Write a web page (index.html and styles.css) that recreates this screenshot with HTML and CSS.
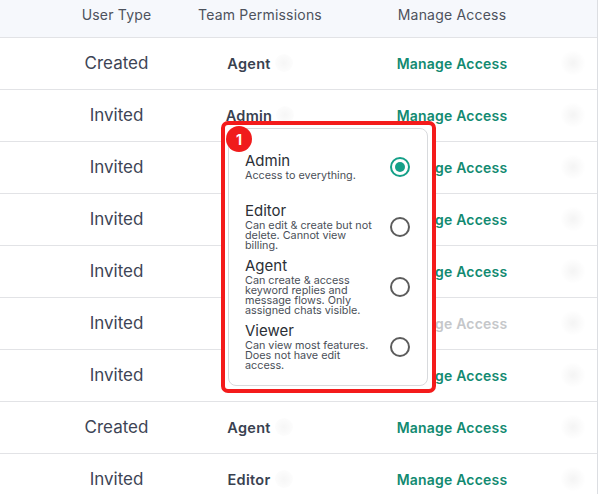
FILE: index.html
```html
<!DOCTYPE html>
<html lang="en">
<head>
  <meta charset="UTF-8" />
  <title>Team Members</title>
  <link rel="stylesheet" href="styles.css">
</head>
<body>
  <div class="table">
    <div class="row head">
      <div class="cell">User Type</div>
      <div class="cell">Team Permissions</div>
      <div class="cell access">Manage Access</div>
      <div class="cell"></div>
    </div>

    <div class="row">
      <div class="cell type">Created</div>
      <div class="cell"><span class="perm">Agent</span><span class="chev"></span></div>
      <div class="cell access"><a class="manage">Manage Access</a></div>
      <div class="cell"><span class="dots"></span></div>
    </div>
    <div class="row">
      <div class="cell type">Invited</div>
      <div class="cell"><span class="perm">Admin</span><span class="chev"></span></div>
      <div class="cell access"><a class="manage">Manage Access</a></div>
      <div class="cell"><span class="dots"></span></div>
    </div>
    <div class="row">
      <div class="cell type">Invited</div>
      <div class="cell"><span class="perm">Agent</span><span class="chev"></span></div>
      <div class="cell access"><a class="manage">Manage Access</a></div>
      <div class="cell"><span class="dots"></span></div>
    </div>
    <div class="row">
      <div class="cell type">Invited</div>
      <div class="cell"><span class="perm">Editor</span><span class="chev"></span></div>
      <div class="cell access"><a class="manage">Manage Access</a></div>
      <div class="cell"><span class="dots"></span></div>
    </div>
    <div class="row">
      <div class="cell type">Invited</div>
      <div class="cell"><span class="perm">Agent</span><span class="chev"></span></div>
      <div class="cell access"><a class="manage">Manage Access</a></div>
      <div class="cell"><span class="dots"></span></div>
    </div>
    <div class="row">
      <div class="cell type">Invited</div>
      <div class="cell"><span class="perm">Admin</span><span class="chev"></span></div>
      <div class="cell access"><a class="manage disabled">Manage Access</a></div>
      <div class="cell"><span class="dots"></span></div>
    </div>
    <div class="row">
      <div class="cell type">Invited</div>
      <div class="cell"><span class="perm">Viewer</span><span class="chev"></span></div>
      <div class="cell access"><a class="manage">Manage Access</a></div>
      <div class="cell"><span class="dots"></span></div>
    </div>
    <div class="row">
      <div class="cell type">Created</div>
      <div class="cell"><span class="perm">Agent</span><span class="chev"></span></div>
      <div class="cell access"><a class="manage">Manage Access</a></div>
      <div class="cell"><span class="dots"></span></div>
    </div>
    <div class="row">
      <div class="cell type">Invited</div>
      <div class="cell"><span class="perm">Editor</span><span class="chev"></span></div>
      <div class="cell access"><a class="manage">Manage Access</a></div>
      <div class="cell"><span class="dots"></span></div>
    </div>
  </div>

  <!-- role picker, highlighted -->
  <div class="callout">
    <span class="badge">1</span>
    <div class="menu">
      <label class="option">
        <div class="opt-text">
          <div class="opt-title">Admin</div>
          <div class="opt-desc">Access to everything.</div>
        </div>
        <span class="radio checked"></span>
      </label>
      <label class="option">
        <div class="opt-text">
          <div class="opt-title">Editor</div>
          <div class="opt-desc">Can edit &amp; create but not delete. Cannot view billing.</div>
        </div>
        <span class="radio"></span>
      </label>
      <label class="option">
        <div class="opt-text">
          <div class="opt-title">Agent</div>
          <div class="opt-desc">Can create &amp; access keyword replies and message flows. Only assigned chats visible.</div>
        </div>
        <span class="radio"></span>
      </label>
      <label class="option">
        <div class="opt-text">
          <div class="opt-title">Viewer</div>
          <div class="opt-desc">Can view most features. Does not have edit access.</div>
        </div>
        <span class="radio"></span>
      </label>
    </div>
  </div>
</body>
</html>
```

FILE: styles.css
```css
* {
  box-sizing: border-box;
}

body {
  margin: 0;
  background: #fff;
  font-family: 'Inter', 'Noto Sans', sans-serif;
  color: #3c4354;
  position: relative;
  overflow: hidden;
  height: 494px;
}

.table {
  width: 598px;
  border-right: 1px solid #dcdee2;
}

.row {
  display: grid;
  grid-template-columns: 143px 144px 216px 1fr;
  padding-left: 45px;
  height: 52px;
  align-items: center;
  border-bottom: 1px solid #e2e3e6;
  padding-bottom: 1px;
}

.row.head {
  height: 38px;
  background: #f6f8fc;
  font-size: 14px;
  letter-spacing: 0.2px;
  color: #4d525c;
  padding-bottom: 8px;
}

.cell {
  display: flex;
  align-items: center;
  justify-content: center;
}

.cell.access {
  padding-left: 24px;
}

.type {
  font-size: 17px;
  color: #3d4455;
}

.perm {
  font-size: 14.5px;
  font-weight: 600;
  letter-spacing: 0.3px;
  color: #394150;
}

.chev {
  width: 18px;
  height: 18px;
  margin-left: 4px;
  border-radius: 50%;
  background: radial-gradient(circle, rgba(0,0,0,0.035), rgba(0,0,0,0));
}

.manage {
  font-size: 14px;
  font-weight: 600;
  color: #128a71;
  letter-spacing: 0.2px;
}

.manage.disabled {
  color: #c5c7ca;
}

.dots {
  width: 26px;
  height: 26px;
  border-radius: 50%;
  background: radial-gradient(circle, rgba(0,0,0,0.045), rgba(0,0,0,0) 70%);
}

/* highlighted dropdown */
.callout {
  position: absolute;
  left: 221px;
  top: 121px;
  width: 215px;
  height: 272px;
  background: #fff;
  border: 4px solid #f41b1b;
  border-radius: 7px;
  padding: 3px 4px 3px 3px;
}

.badge {
  position: absolute;
  left: 1px;
  top: 1px;
  width: 26px;
  height: 26px;
  border-radius: 50%;
  background: #f01c1c;
  color: #fff;
  font-size: 14px;
  font-weight: 700;
  display: flex;
  align-items: center;
  justify-content: center;
  z-index: 2;
}

.menu {
  height: 100%;
  background: #fff;
  border: 1px solid #d8dadd;
  border-radius: 8px;
  padding: 8px 17px 0 16px;
}

.option {
  display: flex;
  align-items: center;
  justify-content: space-between;
  height: 60px;
}

.opt-text {
  width: 134px;
}

.opt-title {
  font-size: 15px;
  line-height: 15px;
  color: #2b2f36;
}

.opt-desc {
  font-size: 10.8px;
  line-height: 10px;
  color: #4a4f58;
  margin-top: 3px;
}

.radio {
  width: 20px;
  height: 20px;
  border-radius: 50%;
  border: 2px solid #5c5c5c;
  flex-shrink: 0;
  display: flex;
  align-items: center;
  justify-content: center;
}

.radio.checked {
  border-color: #14a088;
}

.radio.checked::after {
  content: "";
  width: 10px;
  height: 10px;
  border-radius: 50%;
  background: #14a088;
}
```
